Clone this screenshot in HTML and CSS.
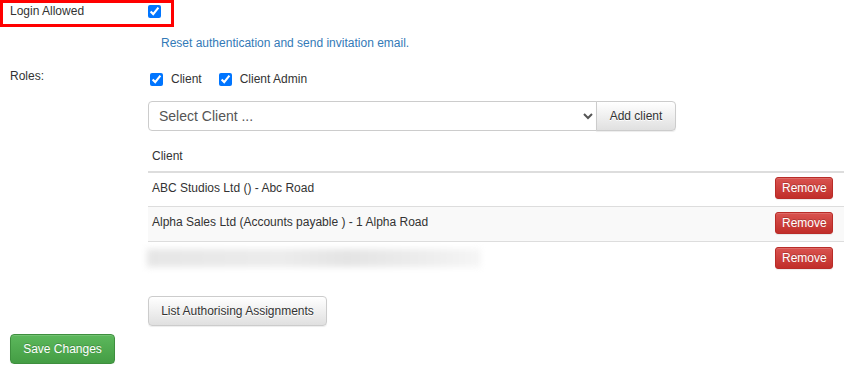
FILE: index.html
```
<!DOCTYPE html>
<html lang="en">
<head>
  <meta charset="UTF-8">
  <title>Edit User</title>
  <link rel="stylesheet" href="styles.css">
</head>
<body>
  <form class="user-form">
    <div class="login-row">
      <label class="login-label" for="loginAllowed">Login Allowed</label>
      <input type="checkbox" id="loginAllowed" checked>
    </div>

    <div class="form-row reset-row">
      <div class="field-label"></div>
      <a href="#" class="reset-link">Reset authentication and send invitation email.</a>
    </div>

    <div class="form-row roles-row">
      <div class="field-label">Roles:</div>
      <div class="controls">
        <div class="role-list">
          <label class="role"><input type="checkbox" checked> Client</label>
          <label class="role"><input type="checkbox" checked> Client Admin</label>
        </div>

        <div class="select-group">
          <select class="client-select">
            <option>Select Client ...</option>
          </select>
          <button type="button" class="btn btn-default btn-addon">Add client</button>
        </div>

        <table class="client-table">
          <thead>
            <tr><th>Client</th><th></th></tr>
          </thead>
          <tbody>
            <tr>
              <td>ABC Studios Ltd () - Abc Road</td>
              <td class="action"><button type="button" class="btn btn-danger">Remove</button></td>
            </tr>
            <tr class="striped">
              <td>Alpha Sales Ltd (Accounts payable ) - 1 Alpha Road</td>
              <td class="action"><button type="button" class="btn btn-danger">Remove</button></td>
            </tr>
            <tr>
              <td><div class="blurred"></div></td>
              <td class="action"><button type="button" class="btn btn-danger">Remove</button></td>
            </tr>
          </tbody>
        </table>

        <button type="button" class="btn btn-default btn-assign">List Authorising Assignments</button>
      </div>
    </div>

    <div class="form-actions">
      <button type="submit" class="btn btn-success">Save Changes</button>
    </div>
  </form>
</body>
</html>
```

FILE: styles.css
```
* {
  box-sizing: border-box;
}

body {
  margin: 0;
  font-family: 'Liberation Sans', Arial, sans-serif;
  font-size: 12px;
  line-height: 17px;
  color: #333;
  background: #fff;
}

.login-row {
  display: flex;
  align-items: flex-start;
  width: 174px;
  height: 27px;
  border: 3px solid #f00;
  padding-left: 7px;
  line-height: 16px;
}

.login-label {
  width: 138px;
}

.login-row input {
  margin: 2px 0 0 0;
  width: 13px;
  height: 13px;
}

.form-row {
  display: flex;
}

.field-label {
  width: 148px;
  flex-shrink: 0;
  padding-left: 10px;
}

.reset-row {
  margin-top: 8px;
  padding-left: 13px;
}

.reset-link {
  color: #337ab7;
  text-decoration: none;
}

.roles-row {
  margin-top: 16px;
}

.controls {
  flex: 1;
}

.role-list {
  display: flex;
  align-items: center;
  height: 17px;
  margin-top: 3px;
}

.role {
  display: flex;
  align-items: center;
  margin-right: 17px;
}

.role input {
  margin: 0 8px 0 2px;
  width: 13px;
  height: 13px;
}

.role + .role input {
  margin-left: 0;
}

.select-group {
  display: flex;
  margin-top: 13px;
  height: 30px;
}

.client-select {
  width: 449px;
  height: 30px;
  padding: 4px 6px;
  font-family: 'Liberation Sans', Arial, sans-serif;
  font-size: 14px;
  color: #555;
  background: #fff;
  border: 1px solid #ccc;
  border-radius: 4px 0 0 4px;
}

.btn {
  font-family: 'Liberation Sans', Arial, sans-serif;
  font-size: 12px;
  line-height: 16px;
  padding: 6px 12px;
  border: 1px solid #ccc;
  border-radius: 4px;
  cursor: pointer;
  box-shadow: inset 0 1px 0 rgba(255, 255, 255, 0.15), 0 1px 1px rgba(0, 0, 0, 0.075);
}

.btn-default {
  color: #333;
  background: linear-gradient(#fff, #e0e0e0);
  border-color: #ccc;
  text-shadow: 0 1px 0 #fff;
}

.btn-addon {
  border-radius: 0 4px 4px 0;
  margin-left: -1px;
  height: 30px;
  width: 80px;
  padding: 0;
}

.client-table {
  width: 696px;
  border-collapse: collapse;
  margin-top: 11px;
}

.client-table th {
  text-align: left;
  font-weight: normal;
  padding: 6px 4px;
  border-bottom: 2px solid #ddd;
}

.client-table td {
  padding: 4px 4px 6px;
  border-top: 1px solid #ddd;
  height: 35px;
  vertical-align: middle;
}

.client-table tbody tr:first-child td {
  border-top: none;
  height: 34px;
}

.client-table .striped td {
  background: #f9f9f9;
}

.client-table .action {
  text-align: right;
  padding-right: 11px;
  width: 80px;
}

.btn-danger {
  color: #fff;
  background: linear-gradient(#d9534f, #c12e2a);
  border-color: #b92c28;
  padding: 2px 6px;
  line-height: 16px;
  height: 22px;
  width: 58px;
  border-radius: 3px;
  text-shadow: 0 -1px 0 rgba(0, 0, 0, 0.2);
}

.blurred {
  width: 334px;
  height: 18px;
  margin-left: -5px;
  background: linear-gradient(to right, #e6e6e6, #ececec 40%, #e4e4e4 60%, #eeeeee 85%, #f6f6f6);
  filter: blur(3px);
}

.btn-assign {
  margin-top: 20px;
  height: 30px;
  width: 179px;
  padding: 0;
}

.form-actions {
  padding-left: 10px;
  margin-top: 8px;
}

.btn-success {
  color: #fff;
  background: linear-gradient(#5cb85c, #449d44);
  border-color: #3e8f3e;
  height: 30px;
  width: 105px;
  padding: 0;
  text-shadow: 0 -1px 0 rgba(0, 0, 0, 0.2);
}
```
